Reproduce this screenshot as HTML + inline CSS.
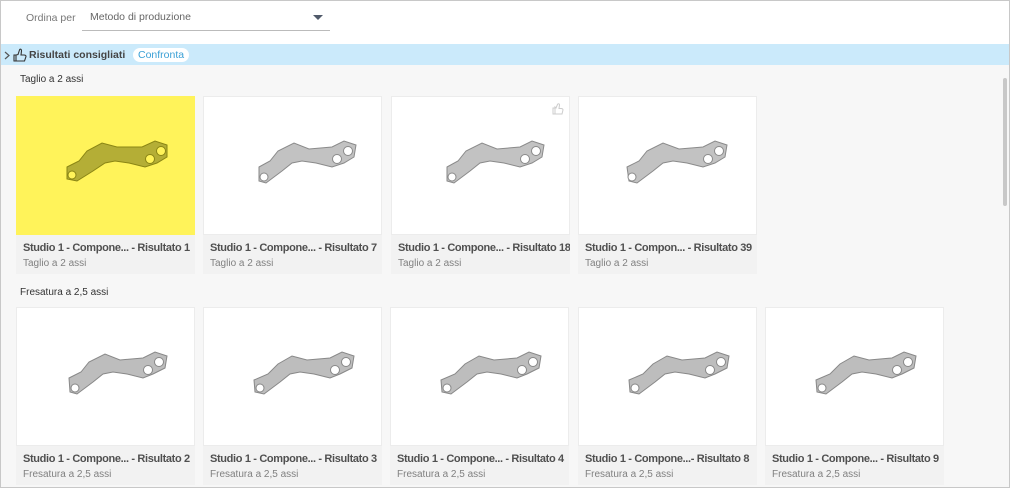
<!DOCTYPE html>
<html><head><meta charset="utf-8"><style>
*{margin:0;padding:0;box-sizing:border-box}
body{width:1010px;height:488px;overflow:hidden;background:#fff;font-family:"Liberation Sans",sans-serif;position:relative}
.frame{position:absolute;left:0;top:0;width:1010px;height:488px;border:1px solid #c8c8c8;pointer-events:none;z-index:5}
.top{position:absolute;left:0;top:0;width:1010px;height:44px;background:#fff}
.band{position:absolute;left:0;top:44px;width:1010px;height:21px;background:#cbeafb}
.content{position:absolute;left:0;top:65px;width:1010px;height:423px;background:#f7f7f7}
.t{position:absolute;white-space:nowrap}
.card{position:absolute;width:179px;background:#f2f2f2;overflow:hidden}
.img{position:absolute;left:0;top:0;width:179px;height:139px;background:#fff;border:1px solid #ececec}
.img svg{position:absolute;left:0;top:0}
.c1{position:absolute;left:7px;top:146px;font-size:11px;font-weight:bold;color:#505050;white-space:nowrap;letter-spacing:-0.35px}
.c2{position:absolute;left:7px;top:162px;font-size:10px;color:#808080;white-space:nowrap}
</style></head><body>
<div class="top"></div>
<div class="t" style="left:26px;top:12px;font-size:10.5px;color:#777">Ordina per</div>
<div class="t" style="left:90px;top:11px;font-size:10.5px;color:#666">Metodo di produzione</div>
<div style="position:absolute;left:82px;top:30px;width:248px;height:1px;background:#bbb"></div>
<svg style="position:absolute;left:313px;top:15px" width="10" height="6"><path d="M0 0H10L5 5Z" fill="#505a6a"/></svg>
<div class="band"></div>
<svg style="position:absolute;left:4px;top:51px" width="6" height="9"><path d="M1 1L5 4.5L1 8" fill="none" stroke="#555" stroke-width="1.2"/></svg>
<svg style="position:absolute;left:13px;top:47px" width="14" height="16"><path d="M3 8V14H11.5L13 9.5C13 8 12 8 11 8H8L8.5 4C8.5 2 7 1.5 6.5 3L5 7.5ZM1 8H3V14H1Z" fill="none" stroke="#333" stroke-width="1.1"/></svg>
<div class="t" style="left:29px;top:49px;font-size:10.5px;font-weight:bold;color:#444">Risultati consigliati</div>
<div class="t" style="left:133px;top:48px;height:14px;padding:1px 5px;background:#fff;border-radius:7px;font-size:10.5px;color:#3aa0d6;line-height:12px">Confronta</div>
<div class="content"></div>
<div style="position:absolute;left:1003px;top:78px;width:4px;height:128px;background:#c8c8c8;border-radius:2px"></div>
<div class="t" style="left:20px;top:74px;font-size:10px;color:#333">Taglio a 2 assi</div>
<div class="t" style="left:20px;top:287px;font-size:10px;color:#333">Fresatura a 2,5 assi</div>

<div class="card" style="left:16px;top:96px;height:178px"><div class="img" style="background:#fff35a;border-color:#fff35a"><svg width="179" height="139"><g fill="#b4ae36" stroke="#8a8514" stroke-width="1"><path d="M50 70L62 64L70 54L85 46L100 50L125 50L138 44L150 48L150 60L140 66L128 70L112 66L98 64L88 66L76 74L60 84L50 82Z"/><circle cx="55" cy="78" r="4" fill="#fff35a"/><circle cx="133" cy="62" r="4.5" fill="#fff35a"/><circle cx="144" cy="54" r="4.5" fill="#fff35a"/></g></svg></div><div class="c1">Studio 1 - Compone... - Risultato 1</div><div class="c2">Taglio a 2 assi</div></div>

<div class="card" style="left:203px;top:96px;height:178px"><div class="img"><svg width="179" height="139"><g fill="#c2c2c2" stroke="#8a8a8a" stroke-width="1"><path d="M55 70L66 64L74 54L90 46L105 52L128 50L140 44L152 48L150 60L140 66L128 70L112 66L98 64L88 66L78 74L62 86L55 84Z"/><circle cx="60" cy="80" r="4" fill="#fff"/><circle cx="133" cy="62" r="4.5" fill="#fff"/><circle cx="144" cy="54" r="4.5" fill="#fff"/></g></svg></div><div class="c1">Studio 1 - Compone... - Risultato 7</div><div class="c2">Taglio a 2 assi</div></div>

<div class="card" style="left:391px;top:96px;height:178px"><div class="img"><svg width="179" height="139"><g fill="#c2c2c2" stroke="#8a8a8a" stroke-width="1"><path d="M55 70L66 64L74 54L90 46L105 52L128 50L140 44L152 48L150 60L140 66L128 70L112 66L98 64L88 66L78 74L62 86L55 84Z"/><circle cx="60" cy="80" r="4" fill="#fff"/><circle cx="133" cy="62" r="4.5" fill="#fff"/><circle cx="144" cy="54" r="4.5" fill="#fff"/></g><path d="M163 10V17H170L171 13C171 12 170 11.5 169 11.5H167L167.5 8C167.5 6.5 166 6.5 165.5 7.5L164 11ZM161 11H163V17H161Z" fill="none" stroke="#ccc" stroke-width="1"/></svg></div><div class="c1">Studio 1 - Compone... - Risultato 18</div><div class="c2">Taglio a 2 assi</div></div>

<div class="card" style="left:578px;top:96px;height:178px"><div class="img"><svg width="179" height="139"><g fill="#c2c2c2" stroke="#8a8a8a" stroke-width="1"><path d="M48 70L60 64L68 54L84 46L100 52L124 50L136 44L148 48L146 60L136 66L124 70L108 66L94 64L84 66L74 74L58 86L50 84Z"/><circle cx="53" cy="80" r="4" fill="#fff"/><circle cx="129" cy="62" r="4.5" fill="#fff"/><circle cx="140" cy="54" r="4.5" fill="#fff"/></g></svg></div><div class="c1">Studio 1 - Compon... - Risultato 39</div><div class="c2">Taglio a 2 assi</div></div>

<div class="card" style="left:16px;top:307px;height:178px"><div class="img"><svg width="179" height="139"><g fill="#bdbdbd" stroke="#888" stroke-width="1"><path d="M52 70L64 64L72 54L88 46L103 52L126 50L138 44L150 48L148 60L136 66L126 70L110 66L96 64L86 66L76 74L60 86L53 84Z"/><circle cx="58" cy="80" r="4" fill="#fff"/><circle cx="131" cy="62" r="4.5" fill="#fff"/><circle cx="142" cy="54" r="4.5" fill="#fff"/></g></svg></div><div class="c1">Studio 1 - Compone... - Risultato 2</div><div class="c2">Fresatura a 2,5 assi</div></div>

<div class="card" style="left:203px;top:307px;height:178px"><div class="img"><svg width="179" height="139"><g fill="#bdbdbd" stroke="#888" stroke-width="1"><path d="M50 72L64 66L74 56L88 48L103 52L126 50L138 44L150 48L148 60L136 66L126 70L110 66L96 64L86 66L76 74L60 86L51 84Z"/><circle cx="56" cy="80" r="4" fill="#fff"/><circle cx="131" cy="62" r="4.5" fill="#fff"/><circle cx="142" cy="54" r="4.5" fill="#fff"/></g></svg></div><div class="c1">Studio 1 - Compone... - Risultato 3</div><div class="c2">Fresatura a 2,5 assi</div></div>

<div class="card" style="left:390px;top:307px;height:178px"><div class="img"><svg width="179" height="139"><g fill="#bdbdbd" stroke="#888" stroke-width="1"><path d="M50 72L64 66L74 56L88 48L103 52L126 50L138 44L150 48L148 60L136 66L126 70L110 66L96 64L86 66L76 74L60 86L51 84Z"/><circle cx="56" cy="80" r="4" fill="#fff"/><circle cx="131" cy="62" r="4.5" fill="#fff"/><circle cx="142" cy="54" r="4.5" fill="#fff"/></g></svg></div><div class="c1">Studio 1 - Compone... - Risultato 4</div><div class="c2">Fresatura a 2,5 assi</div></div>

<div class="card" style="left:578px;top:307px;height:178px"><div class="img"><svg width="179" height="139"><g fill="#bdbdbd" stroke="#888" stroke-width="1"><path d="M50 72L64 66L74 56L88 48L103 52L126 50L138 44L150 48L148 60L136 66L126 70L110 66L96 64L86 66L76 74L60 86L51 84Z"/><circle cx="56" cy="80" r="4" fill="#fff"/><circle cx="131" cy="62" r="4.5" fill="#fff"/><circle cx="142" cy="54" r="4.5" fill="#fff"/></g></svg></div><div class="c1">Studio 1 - Compone...- Risultato 8</div><div class="c2">Fresatura a 2,5 assi</div></div>

<div class="card" style="left:765px;top:307px;height:178px"><div class="img"><svg width="179" height="139"><g fill="#bdbdbd" stroke="#888" stroke-width="1"><path d="M50 72L64 66L74 56L88 48L103 52L126 50L138 44L150 48L148 60L136 66L126 70L110 66L96 64L86 66L76 74L60 86L51 84Z"/><circle cx="56" cy="80" r="4" fill="#fff"/><circle cx="131" cy="62" r="4.5" fill="#fff"/><circle cx="142" cy="54" r="4.5" fill="#fff"/></g></svg></div><div class="c1">Studio 1 - Compone... - Risultato 9</div><div class="c2">Fresatura a 2,5 assi</div></div>

<div class="frame"></div>
</body></html>
